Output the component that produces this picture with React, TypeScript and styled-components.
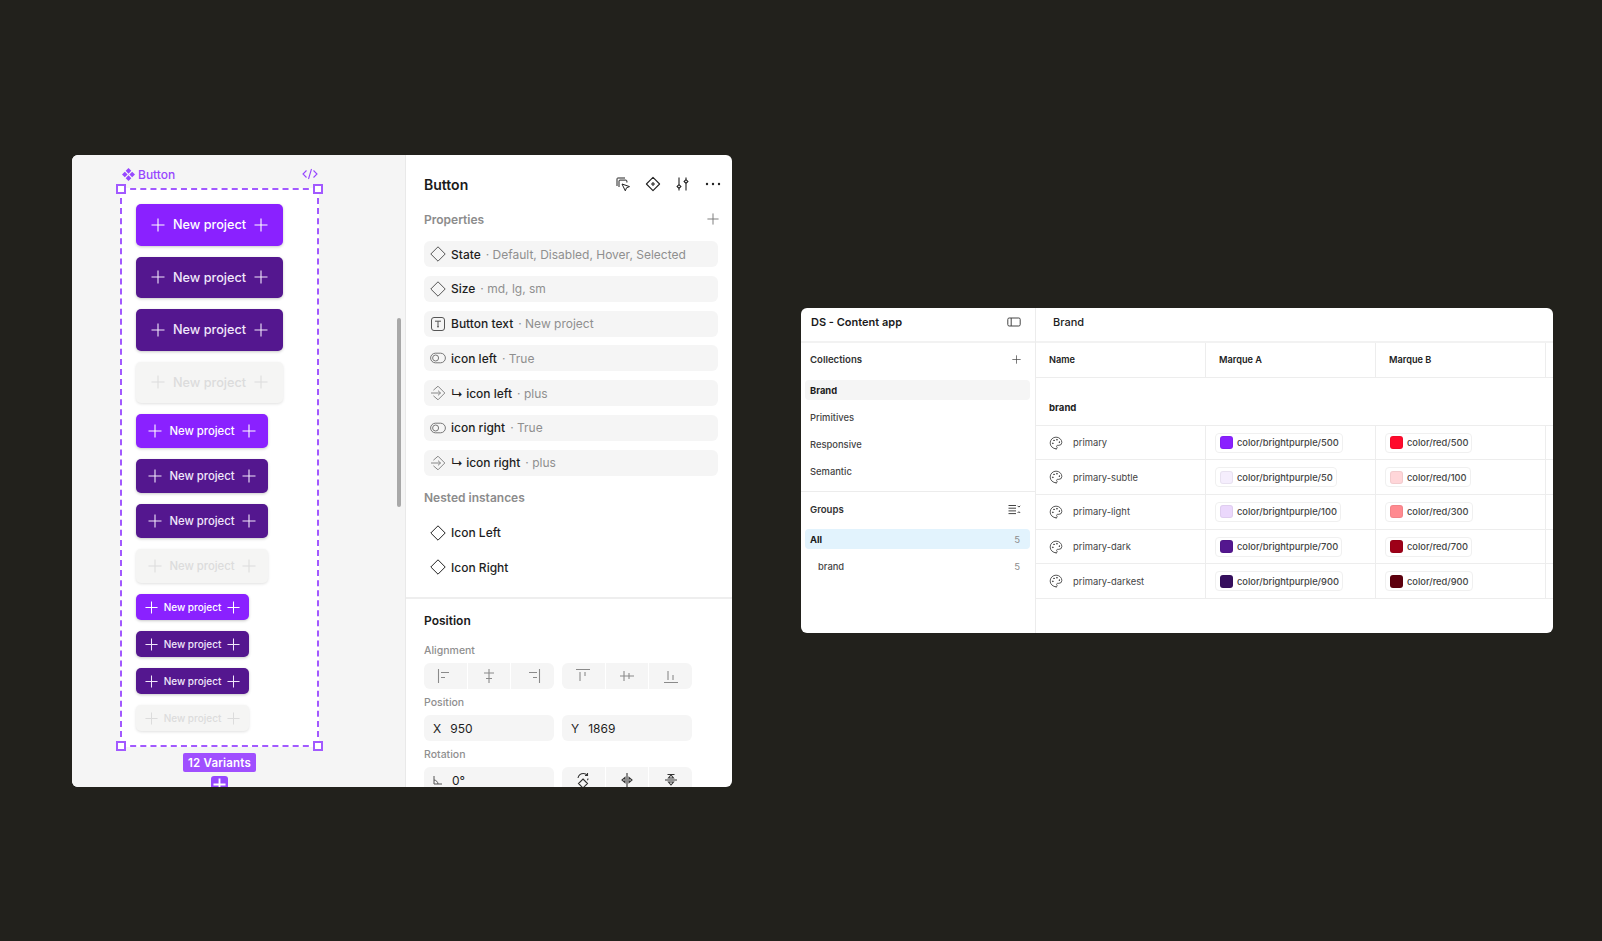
import React from 'react'
import styled, { createGlobalStyle } from 'styled-components'
import { Palette } from 'lucide-react'

const GlobalStyle = createGlobalStyle`
  html, body {
    margin: 0;
    padding: 0;
    background: #22211c;
  }
  body {
    font-family: Inter, "Liberation Sans", sans-serif;
    -webkit-font-smoothing: antialiased;
  }
  * {
    box-sizing: border-box;
  }
`

const Stage = styled.div`
  width: 1602px;
  height: 941px;
  overflow: hidden;
  display: flex;
  align-items: flex-start;
  padding: 155px 0 0 72px;
  gap: 69px;
`

/* left window */

const EditorWindow = styled.section`
  width: 660px;
  height: 632px;
  flex: none;
  display: flex;
  overflow: hidden;
  border-radius: 6px;
  background: #fff;
`

const Canvas = styled.div`
  position: relative;
  width: 334px;
  flex: none;
  background: #f5f5f5;
  padding: 12px 0 0 48px;
  border-right: 1px solid #e9e9e9;
`

const Scrollbar = styled.div`
  position: absolute;
  left: 325px;
  top: 163px;
  width: 4px;
  height: 189px;
  border-radius: 2px;
  background: #a8a8a8;
`

const Selection = styled.div`
  width: 199px;
  display: flex;
  flex-direction: column;
  align-items: center;
`

const LabelRow = styled.div`
  width: 100%;
  height: 14px;
  margin-bottom: 7px;
  padding: 0 1px 0 2px;
  display: flex;
  align-items: center;
  justify-content: space-between;
  color: #9747ff;
  font-size: 12px;
  font-weight: 500;
`

const LabelName = styled.span`
  display: flex;
  align-items: center;
  gap: 3px;
`

const VariantFrame = styled.div`
  position: relative;
  width: 199px;
  height: 559px;
  padding: 14px 14px;
  background: #fff;
  border: 2px dashed #a259ff;
  display: flex;
  flex-direction: column;
  align-items: flex-start;
  gap: 11px;
`

const Handle = styled.span<{ $x: 'left' | 'right'; $y: 'top' | 'bottom' }>`
  position: absolute;
  ${(p) => p.$x}: -6px;
  ${(p) => p.$y}: -6px;
  width: 10px;
  height: 10px;
  background: #fff;
  border: 2px solid #a259ff;
`

const sizes = {
  md: { w: 147, h: 41.5, font: 12.7, pad: 15, icon: 14 },
  sm: { w: 132, h: 34, font: 11.3, pad: 12, icon: 14 },
  xs: { w: 113, h: 26, font: 10, pad: 9, icon: 13 },
}

type Size = keyof typeof sizes
type Tone = 'bright' | 'dark' | 'disabled'

const tones = {
  bright: { bg: '#8a21ff', fg: '#fff' },
  dark: { bg: '#54178f', fg: '#f1e8fb' },
  disabled: { bg: '#f5f5f4', fg: '#dcdcdc' },
}

const VariantButton = styled.button<{ $size: Size; $tone: Tone }>`
  flex: none;
  width: ${(p) => sizes[p.$size].w}px;
  height: ${(p) => sizes[p.$size].h}px;
  padding: 0 ${(p) => sizes[p.$size].pad}px;
  display: flex;
  align-items: center;
  justify-content: space-between;
  border: 0;
  border-radius: 5px;
  background: ${(p) => tones[p.$tone].bg};
  color: ${(p) => tones[p.$tone].fg};
  font-family: inherit;
  font-size: ${(p) => sizes[p.$size].font}px;
  font-weight: 450;
  box-shadow: 0 1px 3px rgba(0, 0, 0, ${(p) => (p.$tone === 'disabled' ? 0.12 : 0.22)});
`

const VariantCount = styled.div`
  margin-top: 6px;
  height: 19px;
  padding: 0 5px;
  display: flex;
  align-items: center;
  border-radius: 2px;
  background: #a04fff;
  color: #fff;
  font-size: 11.5px;
  font-weight: 600;
  letter-spacing: 0.2px;
`

const AddVariant = styled.div`
  margin-top: 4px;
  width: 17px;
  height: 17px;
  display: flex;
  align-items: center;
  justify-content: center;
  border-radius: 3px;
  background: #9747ff;
  color: #fff;
`

/* properties panel */

const Inspector = styled.div`
  flex: 1;
  min-width: 0;
  display: flex;
  flex-direction: column;
`

const InspectorTop = styled.div`
  padding: 19px 14px 17px 18px;
`

const PanelHead = styled.div`
  height: 20px;
  display: flex;
  align-items: center;
  justify-content: space-between;
`

const PanelTitle = styled.h2`
  margin: 0;
  font-size: 14px;
  font-weight: 600;
  color: #1a1a1a;
`

const HeadIcons = styled.div`
  display: flex;
  align-items: center;
  gap: 14px;
  margin-right: -3px;
  color: #222;
`

const SectionHead = styled.div`
  margin: 15px 0 12px 0;
  height: 20px;
  display: flex;
  align-items: center;
  justify-content: space-between;
  color: #8c8c8c;
  font-size: 12px;
  font-weight: 600;
`

const AddProp = styled.span`
  display: flex;
  color: #777;
  margin-right: -1px;
`

const PropList = styled.div`
  display: flex;
  flex-direction: column;
  gap: 8.75px;
  width: 294px;
`

const PropRow = styled.div<{ $plain?: boolean }>`
  height: 26px;
  padding: 0 6px;
  display: flex;
  align-items: center;
  gap: 5px;
  border-radius: 6px;
  background: ${(p) => (p.$plain ? 'transparent' : '#f5f5f5')};
  font-size: 12px;
  color: #1e1e1e;
  white-space: nowrap;
`

const PropName = styled.span`
  font-weight: 450;
`

const PropValue = styled.span`
  color: #8f8f8f;
`

const NestedHead = styled.div`
  margin: 14px 0 14px;
  height: 16px;
  line-height: 16px;
  color: #8c8c8c;
  font-size: 12px;
  font-weight: 600;
`

const PositionPanel = styled.div`
  flex: 1;
  padding: 12px 0 0 18px;
  border-top: 2px solid #eeeeee;
`

const PositionTitle = styled.h3`
  margin: 0 0 13px;
  height: 20px;
  line-height: 20px;
  font-size: 12px;
  font-weight: 600;
  color: #1a1a1a;
`

const FieldLabel = styled.div`
  height: 14px;
  line-height: 14px;
  margin: 7px 0 5px;
  font-size: 10.5px;
  font-weight: 500;
  color: #8f8f8f;
`

const FieldRow = styled.div`
  display: grid;
  grid-template-columns: 130px 130px;
  gap: 8px;
`

const SegmentGroup = styled.div`
  height: 26px;
  display: flex;
  gap: 1px;
  overflow: hidden;
  border-radius: 6px;
`

const Segment = styled.div<{ $dark?: boolean }>`
  flex: 1;
  display: flex;
  align-items: center;
  justify-content: center;
  background: #f5f5f5;
  color: ${(p) => (p.$dark ? '#333' : '#8a8a8a')};
`

const NumberField = styled.div`
  height: 26px;
  padding: 0 9px;
  display: flex;
  align-items: center;
  gap: 9px;
  border-radius: 6px;
  background: #f5f5f5;
  font-size: 12px;
  color: #1e1e1e;
`

/* variables window */

const VariablesWindow = styled.section`
  width: 752px;
  height: 325px;
  flex: none;
  margin-top: 153px;
  display: flex;
  overflow: hidden;
  border-radius: 6px;
  background: #fff;
`

const Sidebar = styled.aside`
  width: 235px;
  flex: none;
  border-right: 1px solid #ececec;
  display: flex;
  flex-direction: column;
`

const SidebarTop = styled.div`
  height: 35px;
  padding: 0 14px 6px 10px;
  flex: none;
  display: flex;
  align-items: center;
  justify-content: space-between;
  border-bottom: 2px solid #f2f2f2;
  font-size: 11px;
  font-weight: 600;
  color: #1a1a1a;
`

const SideHead = styled.div<{ $top: number }>`
  height: 16px;
  margin-top: ${(p) => p.$top}px;
  padding: 0 14px 0 9px;
  flex: none;
  display: flex;
  align-items: center;
  justify-content: space-between;
  font-size: 9.6px;
  font-weight: 600;
  color: #333;
`

const AddCollection = styled.span`
  display: flex;
  color: #444;
`

const SideList = styled.div<{ $top: number; $gap: number }>`
  margin-top: ${(p) => p.$top}px;
  padding: 0 5px 0 4px;
  display: flex;
  flex-direction: column;
  gap: ${(p) => p.$gap}px;
`

const SideItem = styled.div<{ $active?: 'grey' | 'blue'; $indent?: boolean }>`
  height: 20px;
  padding: 0 10px 0 ${(p) => (p.$indent ? 13 : 5)}px;
  display: flex;
  align-items: center;
  justify-content: space-between;
  border-radius: 4px;
  background: ${(p) => (p.$active === 'grey' ? '#f5f5f5' : p.$active === 'blue' ? '#e2f3fd' : 'transparent')};
  font-size: 9.4px;
  font-weight: ${(p) => (p.$active ? 700 : 500)};
  color: ${(p) => (p.$active ? '#1a1a1a' : '#444')};
`

const Count = styled.span`
  font-size: 9.6px;
  font-weight: 400;
  color: #8c8c8c;
`

const SideDivider = styled.div`
  height: 1px;
  margin-top: 10px;
  flex: none;
  background: #ececec;
`

const Main = styled.div`
  flex: 1;
  min-width: 0;
  display: flex;
  flex-direction: column;
`

const MainTop = styled.div`
  height: 35px;
  padding: 0 0 6px 17px;
  flex: none;
  display: flex;
  align-items: center;
  border-bottom: 2px solid #f2f2f2;
  font-size: 11px;
  font-weight: 500;
  color: #222;
`

const TableRow = styled.div`
  height: 34.7px;
  flex: none;
  display: grid;
  grid-template-columns: 170px 170px 170px 1fr;
  border-bottom: 1px solid #ededed;
`

const Cell = styled.div`
  display: flex;
  align-items: center;
  padding-left: 9px;
  border-right: 1px solid #ededed;
  min-width: 0;
  &:first-child {
    padding-left: 13px;
    gap: 10px;
  }
  &:last-child {
    border-right: 0;
  }
`

const HeadCell = styled(Cell)`
  padding-left: 13px;
  font-size: 9.2px;
  font-weight: 600;
  color: #222;
`

const GroupRow = styled.div`
  height: 48px;
  flex: none;
  padding: 23px 0 0 13px;
  border-bottom: 1px solid #ededed;
  font-size: 9.6px;
  font-weight: 700;
  line-height: 14px;
  color: #222;
`

const VarName = styled.span`
  font-size: 9.4px;
  font-weight: 400;
  color: #444;
`

const TokenPill = styled.div`
  height: 20px;
  padding: 0 3px 0 4px;
  display: flex;
  align-items: center;
  gap: 4px;
  border: 1px solid #f0f0f0;
  border-radius: 4px;
  font-size: 9.3px;
  font-weight: 500;
  color: #444;
  white-space: nowrap;
`

const Swatch = styled.span<{ $color: string }>`
  width: 13px;
  height: 13px;
  flex: none;
  border-radius: 3px;
  background: ${(p) => p.$color};
  box-shadow: inset 0 0 0 1px rgba(0, 0, 0, 0.05);
`

/* drawings */

const Plus: React.FC<{ size?: number; weight?: number }> = ({ size = 14, weight = 1.1 }) => (
  <svg width={size} height={size} viewBox="0 0 14 14" fill="none" stroke="currentColor" strokeWidth={weight}>
    <path d="M7 .5v13M.5 7h13" />
  </svg>
)

const ComponentGlyph = () => (
  <svg width="13" height="13" viewBox="0 0 12 12" fill="currentColor">
    <path d="M6 0 8.6 2.6 6 5.2 3.4 2.6zM2.6 3.4 5.2 6 2.6 8.6 0 6zM9.4 3.4 12 6 9.4 8.6 6.8 6zM6 6.8l2.6 2.6L6 12 3.4 9.4z" />
  </svg>
)

const CodeGlyph = () => (
  <svg width="16" height="12" viewBox="0 0 16 12" fill="none" stroke="currentColor" strokeWidth="1.1">
    <path d="M4.5 2.5 1 6l3.5 3.5M11.5 2.5 15 6l-3.5 3.5M9.5 1 6.5 11" />
  </svg>
)

const Diamond: React.FC<{ dark?: boolean }> = ({ dark }) => (
  <svg width="16" height="16" viewBox="0 0 16 16" fill="none" stroke={dark ? '#222' : '#555'} strokeWidth="1">
    <path d="M8 .8 15.2 8 8 15.2.8 8z" strokeLinejoin="round" />
  </svg>
)

const TextGlyph = () => (
  <svg width="16" height="16" viewBox="0 0 16 16" fill="none" stroke="#555" strokeWidth="1">
    <rect x="1.5" y="1.5" width="13" height="13" rx="2.5" />
    <path d="M5 5.2h6M8 5.2v5.6M7 10.8h2" />
  </svg>
)

const ToggleGlyph = () => (
  <svg width="16" height="16" viewBox="0 0 16 16" fill="none" stroke="#777" strokeWidth="1">
    <rect x=".6" y="3.2" width="14.8" height="9.6" rx="4.8" />
    <circle cx="5.6" cy="8" r="3" />
  </svg>
)

const SwapGlyph = () => (
  <svg width="16" height="16" viewBox="0 0 16 16" fill="none" stroke="#888" strokeWidth="1">
    <path d="M3.4 5.2 8 1.2 14.8 8 8 14.8l-4.6-4M1 8h9.5M8 5.6 10.5 8 8 10.4" />
  </svg>
)

const CursorsGlyph = () => (
  <svg width="16" height="16" viewBox="0 0 16 16" fill="none" stroke="currentColor" strokeWidth="1">
    <path d="M2 10V2.8c0-.5.3-.8.8-.8H10M4 11V5c0-.6.4-.9.9-.9H11c.5 0 .9.4.9.9v1.5M7 8l7.5 2.6-3 1.2-1.2 3z" strokeLinejoin="round" />
  </svg>
)

const DiamondPlusGlyph = () => (
  <svg width="16" height="16" viewBox="0 0 16 16" fill="none" stroke="currentColor" strokeWidth="1.1">
    <path d="M8 1.4 14.6 8 8 14.6 1.4 8zM8 6v4M6 8h4" strokeLinejoin="round" />
  </svg>
)

const SlidersGlyph = () => (
  <svg width="16" height="16" viewBox="0 0 16 16" fill="none" stroke="currentColor" strokeWidth="1.1">
    <path d="M4 1.5v7M4 12.5v2M11 1.5v2M11 7.5v7M4 8.6l1.9 1.9L4 12.4l-1.9-1.9zM11 3.6l1.9 1.9L11 7.4 9.1 5.5z" />
  </svg>
)

const DotsGlyph = () => (
  <svg width="16" height="16" viewBox="0 0 16 16" fill="currentColor">
    <circle cx="2" cy="8" r="1.2" />
    <circle cx="8" cy="8" r="1.2" />
    <circle cx="14" cy="8" r="1.2" />
  </svg>
)

const PanelGlyph = () => (
  <svg width="14" height="12" viewBox="0 0 14 12" fill="none" stroke="#444" strokeWidth="1">
    <rect x=".8" y="2" width="12.4" height="8" rx="1.4" />
    <path d="M4.2 2v8" />
  </svg>
)

const CollapseGlyph = () => (
  <svg width="13" height="11" viewBox="0 0 13 11" fill="none" stroke="#444" strokeWidth="1">
    <path d="M.5 1.5h7.5M.5 4.2h7.5M.5 6.9h7.5M.5 9.6h7.5M9.6 1.8l1.3 1.3 1.3-1.3M9.6 9l1.3-1.3L12.2 9" />
  </svg>
)

const alignIcons = [
  'M1.5 1v14M4 4.5h8M4 9.5h4',
  'M8 1v14M3 5h10M5 10.5h6',
  'M14.5 1v14M4 4.5h8M8 9.5h4',
  'M1 1.5h14M5 4v9M10 4v4',
  'M1 8h14M5 3v10M10 5v6',
  'M1 14.5h14M5 3v9M10 7v5',
]

const AlignGlyph: React.FC<{ d: string }> = ({ d }) => (
  <svg width="16" height="16" viewBox="0 0 16 16" fill="none" stroke="currentColor" strokeWidth="1.1">
    <path d={d} />
  </svg>
)

const AngleGlyph = () => (
  <svg width="10" height="10" viewBox="0 0 10 10" fill="none" stroke="#555" strokeWidth="1">
    <path d="M1 1v8h8M1 5c2 0 4 2 4 4" />
  </svg>
)

const flipIcons = [
  'M8 7l4.5 4.5L8 16l-4.5-4.5zM3 6c.6-2.6 3-4.5 5.5-4.5 1.6 0 3 .7 4 1.8M12.5 1v2.5H10M13 6.5c0 .8-.3 1.3-.6 1.8',
  'M8 1v14M6 5.5v5L3 8zM10 5.5v5L13 8z',
  'M2 8h12M5.5 6h5L8 3zM5.5 10h5L8 13zM4.5 2.5h7',
]

const buttons: { size: Size; tone: Tone }[] = [
  { size: 'md', tone: 'bright' },
  { size: 'md', tone: 'dark' },
  { size: 'md', tone: 'dark' },
  { size: 'md', tone: 'disabled' },
  { size: 'sm', tone: 'bright' },
  { size: 'sm', tone: 'dark' },
  { size: 'sm', tone: 'dark' },
  { size: 'sm', tone: 'disabled' },
  { size: 'xs', tone: 'bright' },
  { size: 'xs', tone: 'dark' },
  { size: 'xs', tone: 'dark' },
  { size: 'xs', tone: 'disabled' },
]

const props = [
  { icon: <Diamond />, name: 'State', value: 'Default, Disabled, Hover, Selected' },
  { icon: <Diamond />, name: 'Size', value: 'md, lg, sm' },
  { icon: <TextGlyph />, name: 'Button text', value: 'New project' },
  { icon: <ToggleGlyph />, name: 'icon left', value: 'True' },
  { icon: <SwapGlyph />, name: '↳ icon left', value: 'plus' },
  { icon: <ToggleGlyph />, name: 'icon right', value: 'True' },
  { icon: <SwapGlyph />, name: '↳ icon right', value: 'plus' },
]

const tokens = [
  { name: 'primary', a: ['#8a21ff', '500'], b: ['#ff0a2c', '500'] },
  { name: 'primary-subtle', a: ['#f5eefd', '50'], b: ['#ffd6d9', '100'] },
  { name: 'primary-light', a: ['#ebd8fc', '100'], b: ['#ff8a90', '300'] },
  { name: 'primary-dark', a: ['#54178f', '700'], b: ['#9e0018', '700'] },
  { name: 'primary-darkest', a: ['#360f5e', '900'], b: ['#5e000e', '900'] },
]

const App: React.FC = () => (
  <>
    <GlobalStyle />
    <Stage>
      <EditorWindow>
        <Canvas>
          <Selection>
            <LabelRow>
              <LabelName>
                <ComponentGlyph />
                Button
              </LabelName>
              <CodeGlyph />
            </LabelRow>
            <VariantFrame>
              <Handle $x="left" $y="top" />
              <Handle $x="right" $y="top" />
              <Handle $x="left" $y="bottom" />
              <Handle $x="right" $y="bottom" />
              {buttons.map((b, i) => (
                <VariantButton key={i} $size={b.size} $tone={b.tone}>
                  <Plus size={sizes[b.size].icon} />
                  New project
                  <Plus size={sizes[b.size].icon} />
                </VariantButton>
              ))}
            </VariantFrame>
            <VariantCount>12 Variants</VariantCount>
            <AddVariant>
              <Plus size={13} weight={2} />
            </AddVariant>
          </Selection>
          <Scrollbar />
        </Canvas>

        <Inspector>
          <InspectorTop>
            <PanelHead>
              <PanelTitle>Button</PanelTitle>
              <HeadIcons>
                <CursorsGlyph />
                <DiamondPlusGlyph />
                <SlidersGlyph />
                <DotsGlyph />
              </HeadIcons>
            </PanelHead>
            <SectionHead>
              Properties
              <AddProp>
                <Plus size={12} />
              </AddProp>
            </SectionHead>
            <PropList>
              {props.map((p) => (
                <PropRow key={p.name}>
                  {p.icon}
                  <PropName>{p.name}</PropName>
                  <PropValue>· {p.value}</PropValue>
                </PropRow>
              ))}
            </PropList>
            <NestedHead>Nested instances</NestedHead>
            <PropList>
              <PropRow $plain>
                <Diamond dark />
                <PropName>Icon Left</PropName>
              </PropRow>
              <PropRow $plain>
                <Diamond dark />
                <PropName>Icon Right</PropName>
              </PropRow>
            </PropList>
          </InspectorTop>

          <PositionPanel>
            <PositionTitle>Position</PositionTitle>
            <FieldLabel>Alignment</FieldLabel>
            <FieldRow>
              <SegmentGroup>
                {alignIcons.slice(0, 3).map((d) => (
                  <Segment key={d}>
                    <AlignGlyph d={d} />
                  </Segment>
                ))}
              </SegmentGroup>
              <SegmentGroup>
                {alignIcons.slice(3).map((d) => (
                  <Segment key={d}>
                    <AlignGlyph d={d} />
                  </Segment>
                ))}
              </SegmentGroup>
            </FieldRow>
            <FieldLabel>Position</FieldLabel>
            <FieldRow>
              <NumberField>
                <span>X</span>
                <span>950</span>
              </NumberField>
              <NumberField>
                <span>Y</span>
                <span>1869</span>
              </NumberField>
            </FieldRow>
            <FieldLabel>Rotation</FieldLabel>
            <FieldRow>
              <NumberField>
                <AngleGlyph />
                <span>0°</span>
              </NumberField>
              <SegmentGroup>
                {flipIcons.map((d) => (
                  <Segment key={d} $dark>
                    <AlignGlyph d={d} />
                  </Segment>
                ))}
              </SegmentGroup>
            </FieldRow>
          </PositionPanel>
        </Inspector>
      </EditorWindow>

      <VariablesWindow>
        <Sidebar>
          <SidebarTop>
            DS - Content app
            <PanelGlyph />
          </SidebarTop>
          <SideHead $top={8}>
            Collections
            <AddCollection>
              <Plus size={9} />
            </AddCollection>
          </SideHead>
          <SideList $top={13} $gap={7}>
            <SideItem $active="grey">Brand</SideItem>
            <SideItem>Primitives</SideItem>
            <SideItem>Responsive</SideItem>
            <SideItem>Semantic</SideItem>
          </SideList>
          <SideDivider />
          <SideHead $top={9}>
            Groups
            <CollapseGlyph />
          </SideHead>
          <SideList $top={12} $gap={7}>
            <SideItem $active="blue">
              All
              <Count>5</Count>
            </SideItem>
            <SideItem $indent>
              brand
              <Count>5</Count>
            </SideItem>
          </SideList>
        </Sidebar>

        <Main>
          <MainTop>Brand</MainTop>
          <TableRow>
            <HeadCell>Name</HeadCell>
            <HeadCell>Marque A</HeadCell>
            <HeadCell>Marque B</HeadCell>
            <HeadCell />
          </TableRow>
          <GroupRow>brand</GroupRow>
          {tokens.map((t) => (
            <TableRow key={t.name}>
              <Cell>
                <Palette size={14} strokeWidth={1.5} color="#444" />
                <VarName>{t.name}</VarName>
              </Cell>
              <Cell>
                <TokenPill>
                  <Swatch $color={t.a[0]} />
                  color/brightpurple/{t.a[1]}
                </TokenPill>
              </Cell>
              <Cell>
                <TokenPill>
                  <Swatch $color={t.b[0]} />
                  color/red/{t.b[1]}
                </TokenPill>
              </Cell>
              <Cell />
            </TableRow>
          ))}
        </Main>
      </VariablesWindow>
    </Stage>
  </>
)

export default App
